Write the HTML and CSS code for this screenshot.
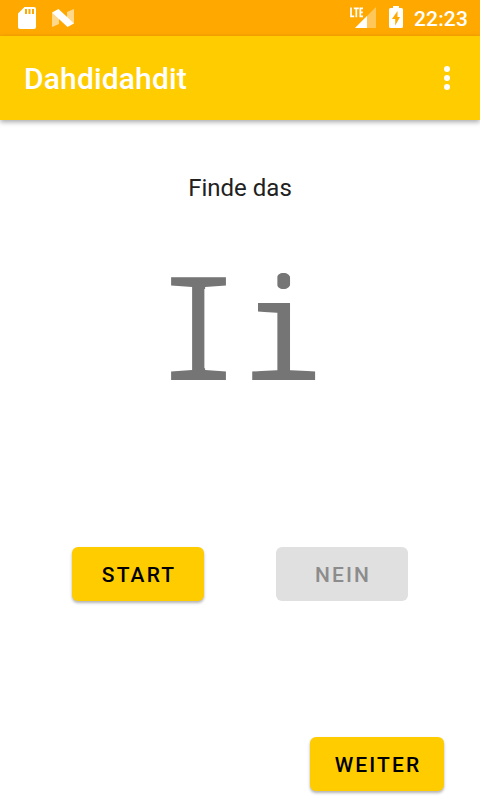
FILE: index.html
```html
<!DOCTYPE html>
<html lang="de">
<head>
<meta charset="utf-8">
<title>Dahdidahdit</title>
<link rel="stylesheet" href="styles.css">
</head>
<body>
<div class="screen">
  <header class="status">
    <svg class="sd" width="18" height="22" viewBox="0 0 18 22"><path fill="#fff" fill-rule="evenodd" d="M6.500 0H16q2 0 2 2v18q0 2-2 2H2q-2 0-2-2V6.500zM7 2v5h2V2zM10.500 2v5h2V2zM14 2v5h2V2z"/></svg>
    <svg class="nougat" width="22" height="18" viewBox="0 0 22 18"><path fill="#fff" opacity=".55" d="M0 3.500V18l7-3V7zM15 3l7-3v14.500l-7-4z"/><path fill="#fff" d="M0 3.500L6.500 0 22 14.500 15.500 18z"/></svg>
    <span class="spacer"></span>
    <svg class="signal" width="27" height="22" viewBox="0 0 27 22"><path fill="#fff" opacity=".35" d="M26 0v21H5z"/><path fill="#fff" d="M17 9v12H5z"/><path fill="#ffa800" d="M0 0h14v11.500H0z"/><path fill="none" stroke="#fff" stroke-width="1.700" d="M1 .5v8.900h3.200M3.800 1.300h5M6.300 1.300v9M13 1.300h-2.700v8.100H13M10.300 5.300h2.500"/></svg>
    <svg class="battery" width="14" height="22" viewBox="0 0 14 22"><path fill="#fff" fill-rule="evenodd" d="M4 0h6v2h2.500Q14 2 14 3.500v17q0 1.500-1.500 1.500h-11Q0 22 0 20.500v-17Q0 2 1.500 2H4zM8.500 5L3 13h3.200v6.500L11 11H8.500z"/></svg>
    <time class="clock">22:23</time>
  </header>
  <div class="appbar">
    <h1>Dahdidahdit</h1>
    <svg width="6" height="24" viewBox="0 0 6 24"><g fill="#fff"><circle cx="3" cy="3" r="3"/><circle cx="3" cy="12" r="3"/><circle cx="3" cy="21" r="3"/></g></svg>
  </div>
  <main>
    <p class="prompt">Finde das</p>
    <div class="letter"><span class="upper">I</span><span class="lower">i</span></div>
    <div class="answers">
      <button class="btn">START</button>
      <button class="btn" disabled>NEIN</button>
    </div>
    <button class="btn next">WEITER</button>
  </main>
</div>
</body>
</html>
```
FILE: styles.css
```css
* { box-sizing: border-box; }
body { margin: 0; font-family: Roboto, sans-serif; background: #fff; }
.screen { width: 480px; height: 800px; overflow: hidden; display: flex; flex-direction: column; }
.status { height: 36px; flex: none; display: flex; align-items: flex-start; padding: 0 12px 0 18px; background: #ffa800; color: #fff; }
.sd { margin-top: 7px; }
.nougat { margin: 9px 0 0 16px; }
.spacer { flex: 1; }
.signal { margin: 7px 12px 0 0; }
.battery { margin: 6px 11px 0 0; }
.clock { font-size: 21px; font-weight: 500; line-height: 36px; padding-top: 1px; letter-spacing: .15px; }
.appbar { height: 84px; flex: none; display: flex; align-items: center; justify-content: space-between; padding: 0 30px 0 24px; background: #fc0; color: #fff; box-shadow: 0 2px 5px rgba(0,0,0,.35); }
h1 { margin: 2px 0 0; font-size: 30px; font-weight: 500; line-height: 36px; letter-spacing: .15px; }
main { flex: 1; display: flex; flex-direction: column; }
.prompt { margin: 52px 0 0; font-size: 24px; line-height: 32px; text-align: center; color: #212121; }
.letter { display: flex; justify-content: center; margin-top: 42px; height: 170px; font-family: "DejaVu Sans Mono", monospace; font-size: 141px; line-height: 170px; color: #757575; }
/* Softens the slab serifs and rounds the dot of the mono face. */
.upper { clip-path: path("M16 30H71V39.500L50 41V124L71 125.500V135H16V125.500L37 124V41L16 39.500Z"); }
.lower { clip-path: path("M36 35C36 24 51 24 51 35C51 46 36 46 36 35ZM18 56H50.500V124L75.500 125.500V135H12V125.500L37 124V67L18 65.500Z"); }
.answers { display: flex; gap: 72px; margin: 131px 72px 0; }
.btn { width: 132px; height: 54px; padding: 2px 0 0 2px; border: 0; border-radius: 6px; background: #fc0; color: #000; font: 500 21px/52px Roboto, sans-serif; letter-spacing: 2.100px; box-shadow: 0 2px 3px rgba(0,0,0,.3); }
.btn:disabled { background: #e0e0e0; color: #8c8c8c; box-shadow: none; }
.next { width: 134px; margin: 136px 36px 0 auto; }
```
